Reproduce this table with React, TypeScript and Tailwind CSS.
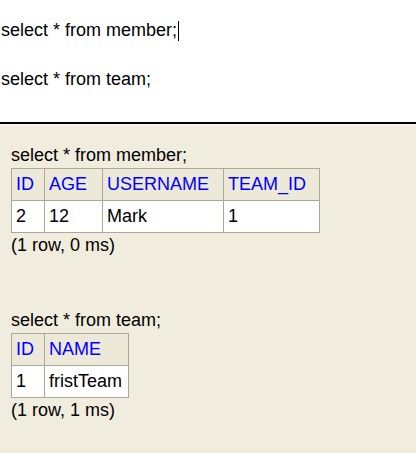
export default function App() {
    const font = { fontFamily: '"Liberation Sans", Arial, sans-serif' };

    return (
        <div className="w-[416px] h-[453px] flex flex-col bg-[#f1edde] text-[18px] text-black overflow-hidden" style={font}>
            {/* SQL editor */}
            <div className="h-[122px] bg-white pt-[18px] pl-[1px] leading-[25px]">
                <div className="flex items-center">
                    <span>select * from member;</span>
                    <span className="ml-[1px] w-[1px] h-[20px] bg-black"></span>
                </div>
                <div className="h-[24px]"></div>
                <div>select * from team;</div>
            </div>
            <div className="h-[2px] bg-black"></div>
            <div className="h-[2px] bg-[#f7f5ee]"></div>

            {/* Results */}
            <div className="pl-[11px] pt-[17px] leading-[25px]">
                <div>select * from member;</div>
                <table className="border-collapse bg-white">
                    <thead>
                        <tr className="bg-[#ece9d8] text-[#0000ff]">
                            <th className="w-[33px] h-[32px] px-[4px] py-0 text-left font-normal border border-[#aca899]">ID</th>
                            <th className="w-[58px] h-[32px] px-[4px] py-0 text-left font-normal border border-[#aca899]">AGE</th>
                            <th className="w-[121px] h-[32px] px-[4px] py-0 text-left font-normal border border-[#aca899]">USERNAME</th>
                            <th className="w-[96px] h-[32px] px-[4px] py-0 text-left font-normal border border-[#aca899]">TEAM_ID</th>
                        </tr>
                    </thead>
                    <tbody>
                        <tr>
                            <td className="h-[32px] px-[4px] py-0 border border-[#aca899]">2</td>
                            <td className="h-[32px] px-[4px] py-0 border border-[#aca899]">12</td>
                            <td className="h-[32px] px-[4px] py-0 border border-[#aca899]">Mark</td>
                            <td className="h-[32px] px-[4px] py-0 border border-[#aca899]">1</td>
                        </tr>
                    </tbody>
                </table>
                <div>(1 row, 0 ms)</div>

                <div className="h-[50px]"></div>

                <div>select * from team;</div>
                <table className="border-collapse bg-white">
                    <thead>
                        <tr className="bg-[#ece9d8] text-[#0000ff]">
                            <th className="w-[33px] h-[32px] px-[4px] py-0 text-left font-normal border border-[#aca899]">ID</th>
                            <th className="w-[84px] h-[32px] px-[4px] py-0 text-left font-normal border border-[#aca899]">NAME</th>
                        </tr>
                    </thead>
                    <tbody>
                        <tr>
                            <td className="h-[32px] px-[4px] py-0 border border-[#aca899]">1</td>
                            <td className="h-[32px] px-[4px] py-0 border border-[#aca899]">fristTeam</td>
                        </tr>
                    </tbody>
                </table>
                <div>(1 row, 1 ms)</div>
            </div>
        </div>
    );
}
